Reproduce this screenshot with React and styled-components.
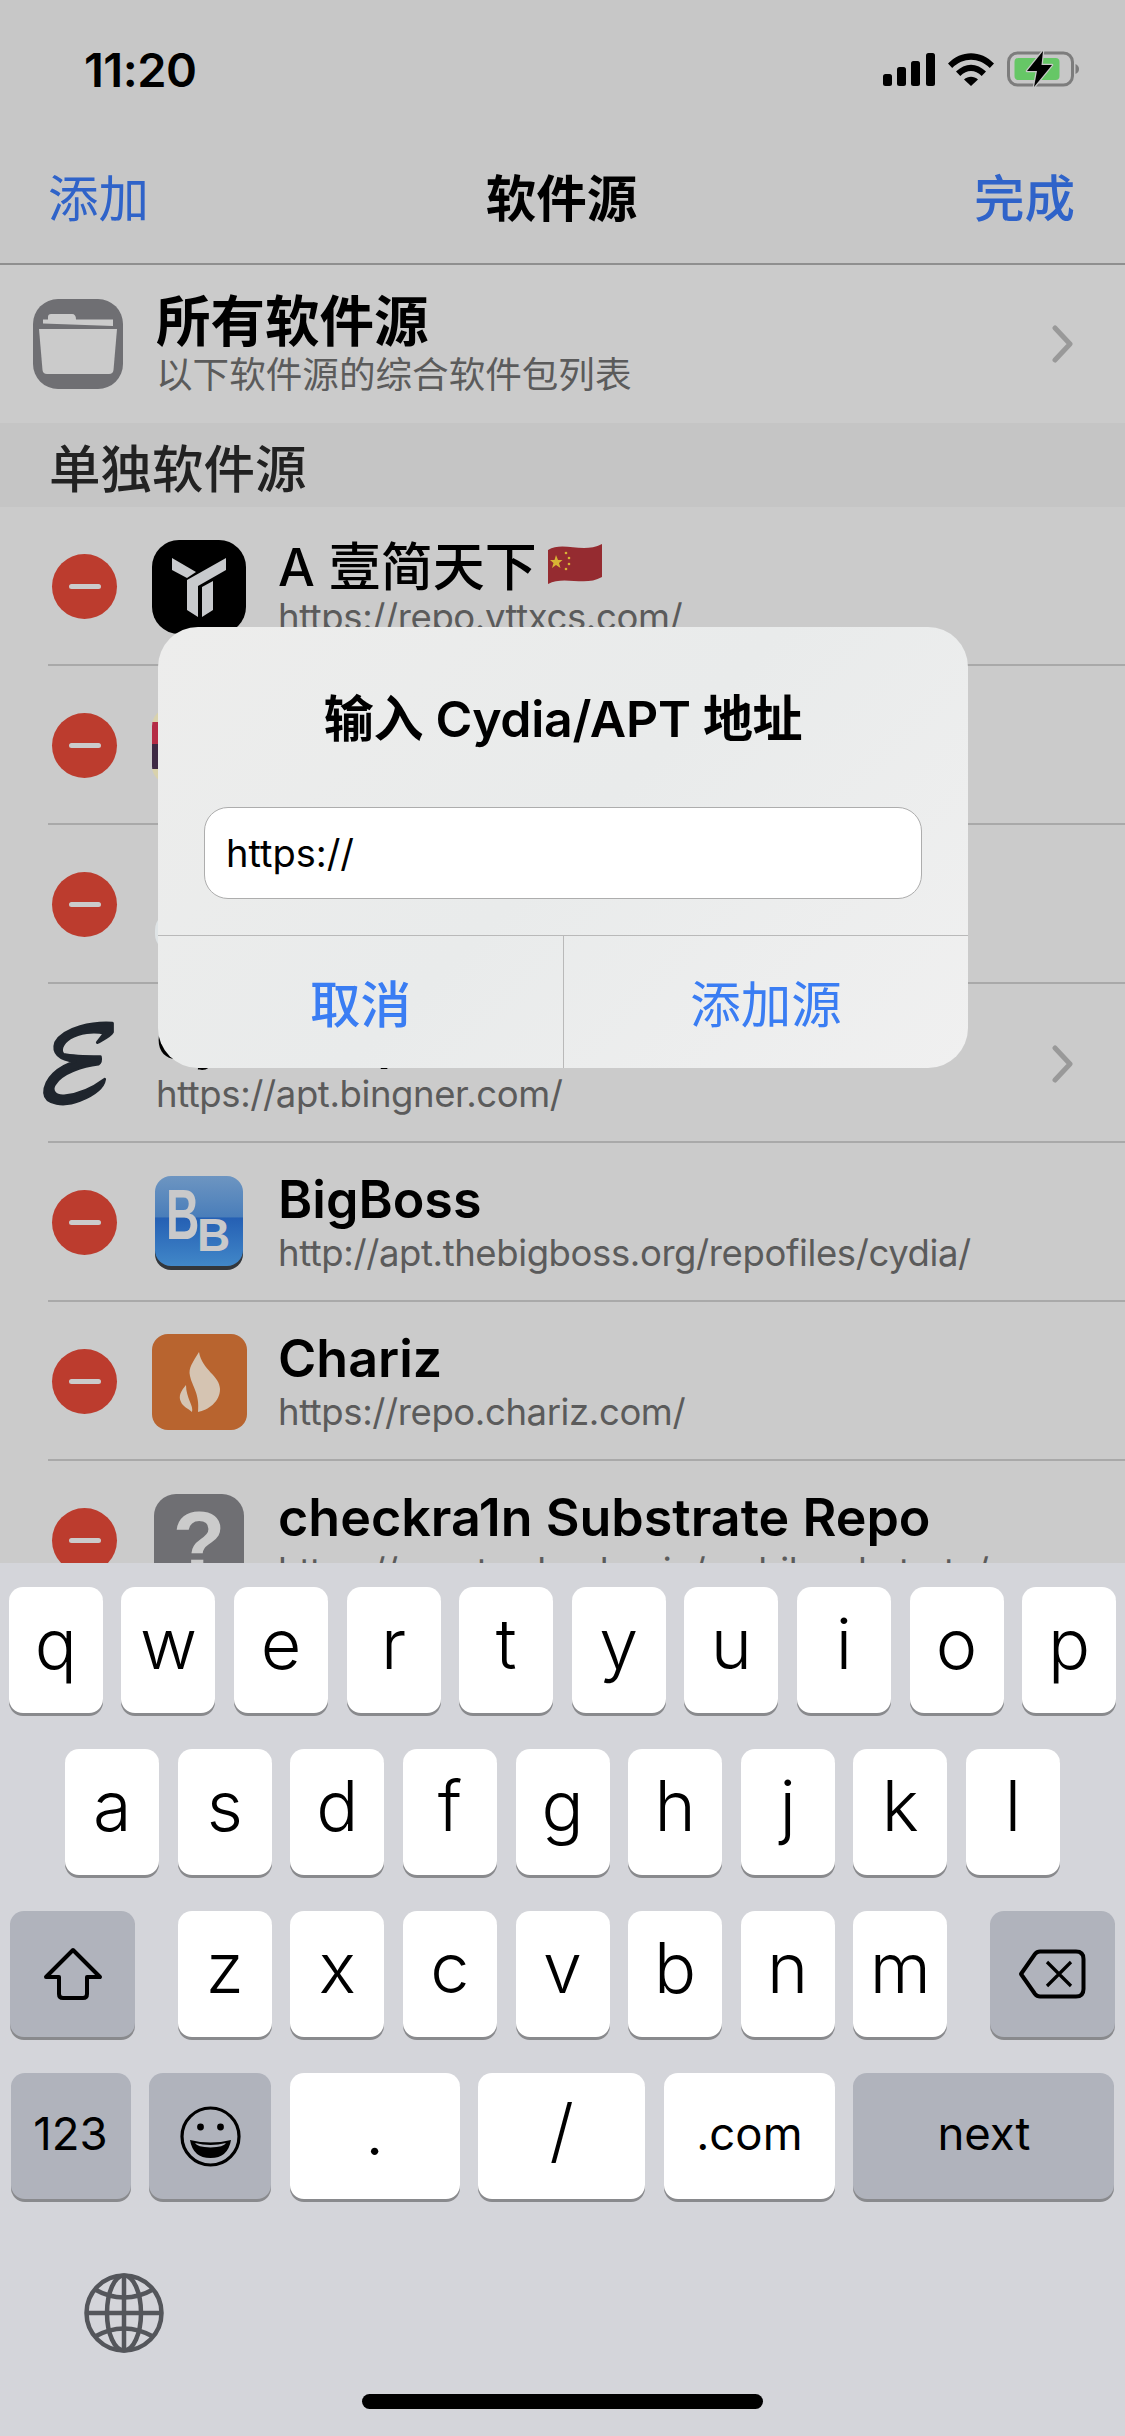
import React from "react";
import styled, { createGlobalStyle } from "styled-components";

const SANS = `Inter, "Noto Sans CJK SC", "Noto Sans", sans-serif`;

const Global = createGlobalStyle`
  html, body { margin: 0; padding: 0; background: #cbcbcb; }
  * { box-sizing: border-box; }
`;

const Screen = styled.div`
  position: relative;
  width: 1125px;
  height: 2436px;
  overflow: hidden;
  display: flex;
  flex-direction: column;
  background: #cbcbcb;
  font-family: ${SANS};
  color: #000;
`;

/* Header */
const Header = styled.header`
  flex: none;
  height: 265px;
  background: #c7c7c7;
  border-bottom: 2px solid #8f8f8f;
`;
const StatusBar = styled.div`
  height: 132px;
  padding: 6px 44px 0 84px;
  display: flex;
  align-items: center;
  justify-content: space-between;
`;
const Time = styled.span`
  font-size: 47px;
  font-weight: 600;
  letter-spacing: -0.5px;
`;
const StatusIcons = styled.div`
  display: flex;
  align-items: center;
  gap: 13px;
`;
const Nav = styled.nav`
  height: 131px;
  padding: 0 50px 5px 48px;
  display: grid;
  grid-template-columns: 1fr auto 1fr;
  align-items: center;
`;
const NavAction = styled.span`
  font-size: 50.5px;
  color: #2f63c9;
  font-weight: ${(p) => (p.$bold ? 500 : 400)};
  text-align: ${(p) => (p.$right ? "right" : "left")};
`;
const NavTitle = styled.span`
  font-size: 50.5px;
  font-weight: 600;
`;

/* List */
const List = styled.main`
  flex: 1;
  min-height: 0;
  overflow: hidden;
`;
const AllRow = styled.div`
  height: 158px;
  padding: 0 50px 0 33px;
  display: flex;
  align-items: center;
`;
const FolderIcon = styled.svg`
  flex: none;
  width: 90px;
  height: 90px;
  margin-right: 33px;
`;
const AllText = styled.div`
  flex: 1;
  display: flex;
  flex-direction: column;
`;
const AllTitle = styled.div`
  font-size: 54.5px;
  line-height: 62px;
  font-weight: 600;
`;
const AllSub = styled.div`
  font-size: 36.6px;
  line-height: 46px;
  color: #5b5b5b;
`;
const SectionHead = styled.div`
  height: 84px;
  padding-left: 49px;
  display: flex;
  align-items: center;
  background: #c5c5c5;
  font-size: 51.5px;
  font-weight: 500;
  color: #222;
`;
const Row = styled.div`
  height: 157px;
  padding: ${(p) => (p.$plain ? "2px 50px 0 42px" : "2px 50px 0 52px")};
  display: flex;
  align-items: center;
  white-space: nowrap;
`;
const Separator = styled.div`
  height: 2px;
  margin-left: 48px;
  background: #a9a9a9;
`;
const Minus = styled.span`
  flex: none;
  width: 65px;
  height: 65px;
  margin-right: 33px;
  border-radius: 50%;
  background: #bc3c2e;
  display: flex;
  align-items: center;
  justify-content: center;
  &::before {
    content: "";
    width: 32px;
    height: 5px;
    border-radius: 3px;
    background: #cbcbcb;
  }
`;
const IconSlot = styled.div`
  flex: none;
  width: 98px;
  height: 94px;
  margin-right: 30px;
  display: flex;
  align-items: center;
  justify-content: center;
`;
const ScriptSlot = styled.div`
  flex: none;
  width: 73px;
  height: 88px;
  margin: 0 41px 0 0;
`;
const RowText = styled.div`
  flex: 1;
  min-width: 0;
  display: flex;
  flex-direction: column;
`;
const RowTitle = styled.div`
  display: flex;
  align-items: center;
  gap: 10px;
  height: 60px;
  font-size: 52px;
  font-weight: 600;
`;
const Han = styled.span`
  font-weight: 500;
`;
const RowSub = styled.div`
  height: 46px;
  line-height: 46px;
  font-size: 36.5px;
  letter-spacing: -0.4px;
  color: #5b5b5b;
`;
const Chevron = styled.svg`
  flex: none;
  width: 24px;
  height: 38px;
`;
const QuestionIcon = styled.div`
  width: 90px;
  height: 94px;
  border-radius: 22px;
  background: #6f6f73;
  color: #cbcbcb;
  font-family: "Liberation Sans", sans-serif;
  font-size: 86px;
  font-weight: 700;
  line-height: 94px;
  text-align: center;
`;
const SliverIcon = styled.div`
  width: ${(p) => (p.$pale ? 88 : 94)}px;
  height: ${(p) => (p.$pale ? 40 : 76)}px;
  align-self: ${(p) => (p.$pale ? "flex-end" : "center")};
  border-radius: 18px;
  background: ${(p) =>
    p.$pale
      ? "#dfe4e6"
      : "linear-gradient(180deg, #d9d2ac 0 18%, #b52c45 18% 48%, #3e2a44 48% 80%, #d9d2ac 80%)"};
`;

/* Dialog */
const Dialog = styled.section`
  position: absolute;
  left: 158px;
  top: 627px;
  width: 810px;
  height: 441px;
  border-radius: 40px;
  overflow: hidden;
  display: flex;
  flex-direction: column;
  background: linear-gradient(135deg, #ededec 0%, #e9ebeb 50%, #f0f0f0 100%);
`;
const DialogTitle = styled.h2`
  flex: none;
  margin: 0;
  height: 180px;
  padding-bottom: 5px;
  display: flex;
  align-items: center;
  justify-content: center;
  font-size: 50px;
  font-weight: 600;
  letter-spacing: -0.3px;
`;
const Field = styled.input`
  flex: none;
  height: 92px;
  margin: 0 46px;
  padding: 0 21px;
  border: 1.5px solid #adadad;
  border-radius: 24px;
  background: #fff;
  font-family: ${SANS};
  font-size: 38px;
  color: #000;
  outline: none;
`;
const Actions = styled.div`
  flex: 1;
  margin-top: 36px;
  display: grid;
  grid-template-columns: 405px 1fr;
  border-top: 1.5px solid #b9b9b9;
`;
const ActionButton = styled.button`
  border: 0;
  padding: 0 0 3px;
  background: transparent;
  font-family: ${SANS};
  font-size: 50.5px;
  font-weight: ${(p) => (p.$strong ? 500 : 400)};
  color: #3a7df3;
  & + & {
    border-left: 1.5px solid #b9b9b9;
  }
`;

/* Keyboard */
const Keyboard = styled.section`
  flex: none;
  height: 873px;
  padding-top: 24px;
  background: #d4d5da;
  display: flex;
  flex-direction: column;
`;
const KeyRows = styled.div`
  display: flex;
  flex-direction: column;
  gap: 36px;
  padding: 0 9px;
`;
const KeyRow = styled.div`
  display: flex;
  justify-content: center;
  gap: 18.6px;
`;
const Key = styled.div`
  flex: none;
  width: ${(p) => p.$w || 94}px;
  height: 126px;
  margin-left: ${(p) => p.$before || 0}px;
  margin-right: ${(p) => p.$after || 0}px;
  border-radius: 14px;
  background: ${(p) => (p.$dark ? "#b0b3bc" : "#fff")};
  box-shadow: 0 3px 0 #898a8d;
  display: flex;
  align-items: center;
  justify-content: center;
  padding-bottom: ${(p) => (p.$glyph ? 0 : p.$small ? 5 : 13)}px;
  font-size: ${(p) => (p.$small ? 45.5 : 70)}px;
  font-weight: ${(p) => (p.$small ? 400 : 300)};
  color: #000;
`;
const Foot = styled.div`
  margin-top: 74px;
  padding-left: 84px;
  display: flex;
`;
const HomeBar = styled.div`
  width: 401px;
  height: 15px;
  margin: 41px auto 0;
  border-radius: 8px;
  background: #000;
`;

/* Drawings */
const Signal = () => (
  <svg width="52" height="33" viewBox="0 0 52 33">
    <rect x="0" y="21" width="9" height="12" rx="2.5" />
    <rect x="14" y="14" width="9" height="19" rx="2.5" />
    <rect x="28" y="8" width="9" height="25" rx="2.5" />
    <rect x="43" y="0" width="9" height="33" rx="2.5" />
  </svg>
);
const Wifi = () => (
  <svg width="46" height="33" viewBox="0 0 46 33">
    <path d="M0 10.5C13 -3.3 33 -3.3 46 10.5L41.8 15C31 4 15 4 4.2 15Z" />
    <path d="M8 18.6C17 9.3 29 9.3 38 18.6L33.7 23C27 16.3 19 16.3 12.3 23Z" />
    <path d="M16 26.5C20 22.7 26 22.7 30 26.5L23 33Z" />
  </svg>
);
const Battery = () => (
  <svg width="74" height="36" viewBox="0 0 74 36">
    <rect x="1.5" y="2" width="64" height="32" rx="9" fill="none" stroke="#7d7d7d" strokeWidth="3" />
    <rect x="7.5" y="7" width="45" height="22" rx="4" fill="#66c766" />
    <path d="M68.5 13C71 14 72 16 72 18S71 22 68.5 23Z" fill="#7d7d7d" />
    <path
      d="M36 0 L20 20 H30 L27 36 L45 14 H34.5 Z"
      fill="#000"
      stroke="#c7c7c7"
      strokeWidth="2.5"
      strokeLinejoin="round"
      paintOrder="stroke"
    />
  </svg>
);
const Folder = () => (
  <FolderIcon viewBox="0 0 90 90">
    <rect width="90" height="90" rx="25" fill="#6f6f73" />
    <path d="M10 20.5H15V18Q15 15 18 15H39Q43 15 43 20.5H80V27L10 24.5Z" fill="#cbcbcb" />
    <path d="M6 30H84L80.5 71Q80 75 76 75H14Q10 75 9.5 71Z" fill="#cbcbcb" />
  </FolderIcon>
);
const ChevronRight = () => (
  <Chevron viewBox="0 0 24 38">
    <path d="M4 3L19 19L4 35" fill="none" stroke="#999" strokeWidth="5" strokeLinecap="round" strokeLinejoin="round" />
  </Chevron>
);
const Tlogo = () => (
  <svg width="94" height="94" viewBox="0 0 94 94">
    <rect width="94" height="94" rx="27" fill="#000" />
    <g fill="#c8cacd">
      <path d="M20 18L44 32L35 38L20 30Z" />
      <path d="M35 40L74 18V30L46 46V77L35 70Z" />
      <path d="M50 47L61 41V70L50 77Z" />
    </g>
  </svg>
);
const BigBossIcon = () => (
  <svg width="88" height="94" viewBox="0 0 88 94">
    <defs>
      <linearGradient id="bbg" x1="0" y1="0" x2="0" y2="1">
        <stop offset="0" stopColor="#6d95c1" />
        <stop offset="0.45" stopColor="#4a7eba" />
        <stop offset="0.47" stopColor="#2560b4" />
        <stop offset="1" stopColor="#4187c8" />
      </linearGradient>
    </defs>
    <rect y="4" width="88" height="90" rx="16" fill="#33373c" />
    <rect width="88" height="90" rx="16" fill="url(#bbg)" />
    <text transform="translate(11 63) scale(.66 1)" fontFamily="Liberation Sans" fontWeight="700" fontSize="70" fill="#c9c9ca">B</text>
    <text x="42" y="75" fontFamily="Liberation Sans" fontWeight="700" fontSize="46" fill="#c9c9ca">B</text>
  </svg>
);
const ChrizIcon = () => (
  <svg width="95" height="96" viewBox="0 0 95 96">
    <rect width="95" height="96" rx="16" fill="#b8642f" />
    <g fill="#d5c4b2">
      <path d="M47 18C41 28 36 34 38 42C40 52 48 60 46 78C56 76 68 68 68 55C68 42 50 36 47 18Z" />
      <path d="M34 51C29 57 26 62 29 68C31 73 36 74 40 78C42 72 34 64 34 51Z" />
    </g>
  </svg>
);
const ScriptE = () => (
  <svg width="73" height="88" viewBox="62 83 224 266">
    <path
      fill="#1f252d"
      stroke="#1f252d"
      strokeWidth="9"
      strokeLinejoin="round"
      d="M278 91C220 87 130 104 104 150C94 180 112 203 165 208C112 225 70 260 70 305C72 340 130 347 178 328C223 310 250 290 254 263C226 284 180 309 130 314C102 316 88 297 101 278C121 243 190 221 235 216C241 212 243 204 241 194C210 194 160 194 128 187C116 177 121 153 148 136C178 118 220 114 254 121L232 150C250 140 272 130 278 118Z"
    />
  </svg>
);
const Flag = () => (
  <svg width="56" height="42" viewBox="0 0 56 42">
    <path d="M1 7C16 -2 36 11 55 1V34C38 44 17 32 1 41Z" fill="#952b30" />
    <path d="M9 12L11 17H15.5L12 20L13.5 25L9 22L5 25L6.5 20L3 17H7.5Z" fill="#d8b334" />
    <g fill="#d8b334">
      <circle cx="19" cy="10" r="1.3" />
      <circle cx="22" cy="15" r="1.3" />
      <circle cx="22" cy="21" r="1.3" />
      <circle cx="19" cy="26" r="1.3" />
    </g>
  </svg>
);
const ShiftGlyph = () => (
  <svg width="62" height="54" viewBox="0 0 62 54">
    <path
      d="M31 3L58 30H45V47Q45 51 41 51H21Q17 51 17 47V30H4Z"
      fill="none"
      stroke="#000"
      strokeWidth="4"
      strokeLinejoin="round"
    />
  </svg>
);
const DeleteGlyph = () => (
  <svg width="68" height="50" viewBox="0 0 68 50">
    <path
      d="M22 2.5H58Q65.5 2.5 65.5 10V40Q65.5 47.5 58 47.5H22Q19 47.5 17 45L3 25L17 5Q19 2.5 22 2.5Z"
      fill="none"
      stroke="#000"
      strokeWidth="4"
      strokeLinejoin="round"
    />
    <path d="M29 13L53 37M53 13L29 37" fill="none" stroke="#000" strokeWidth="3.2" />
  </svg>
);
const SmileGlyph = () => (
  <svg width="61" height="61" viewBox="0 0 61 61">
    <circle cx="30.5" cy="30.5" r="28.5" fill="none" stroke="#000" strokeWidth="3.2" />
    <circle cx="20.5" cy="21" r="3.4" />
    <circle cx="40.5" cy="21" r="3.4" />
    <path d="M10 34Q30.5 39 51 34Q48 52 30.5 52Q13 52 10 34Z" fill="#000" />
    <path d="M15 37Q30.5 41 46 37Q44 41 30.5 41.5Q17 41 15 37Z" fill="#b0b3bc" />
  </svg>
);
const Globe = () => (
  <svg width="80" height="80" viewBox="0 0 80 80" fill="none" stroke="#54565b" strokeWidth="4.5">
    <circle cx="40" cy="40" r="37.5" />
    <ellipse cx="40" cy="40" rx="17" ry="37.5" />
    <path d="M40 2.5V77.5M2.5 40H77.5" />
    <path d="M10 16Q40 33 70 16M10 64Q40 47 70 64" />
  </svg>
);

const sources = [
  { key: "a", title: <><Han>A 壹简天下</Han><Flag /></>, sub: "https://repo.yttxcs.com/", icon: <Tlogo /> },
  { key: "b", icon: <SliverIcon /> },
  { key: "c", icon: <SliverIcon $pale /> },
  { key: "d", plain: true, title: "Cydia Repo", sub: "https://apt.bingner.com/" },
  { key: "e", title: "BigBoss", sub: "http://apt.thebigboss.org/repofiles/cydia/", icon: <BigBossIcon /> },
  { key: "f", title: "Chariz", sub: "https://repo.chariz.com/", icon: <ChrizIcon /> },
  { key: "g", title: "checkra1n Substrate Repo", sub: "https://assets.checkra.in/mobilesubstrate/", icon: <QuestionIcon>?</QuestionIcon> },
];

const rowOne = ["q", "w", "e", "r", "t", "y", "u", "i", "o", "p"];
const rowTwo = ["a", "s", "d", "f", "g", "h", "j", "k", "l"];
const rowThree = ["z", "x", "c", "v", "b", "n", "m"];

export default function App() {
  return (
    <Screen>
      <Global />
      <Header>
        <StatusBar>
          <Time>11:20</Time>
          <StatusIcons>
            <Signal />
            <Wifi />
            <Battery />
          </StatusIcons>
        </StatusBar>
        <Nav>
          <NavAction>添加</NavAction>
          <NavTitle>软件源</NavTitle>
          <NavAction $right $bold>完成</NavAction>
        </Nav>
      </Header>
      <List>
        <AllRow>
          <Folder />
          <AllText>
            <AllTitle>所有软件源</AllTitle>
            <AllSub>以下软件源的综合软件包列表</AllSub>
          </AllText>
          <ChevronRight />
        </AllRow>
        <SectionHead>单独软件源</SectionHead>
        {sources.map((s) => (
          <React.Fragment key={s.key}>
            <Row $plain={s.plain}>
              {s.plain ? (
                <ScriptSlot><ScriptE /></ScriptSlot>
              ) : (
                <>
                  <Minus />
                  <IconSlot>{s.icon}</IconSlot>
                </>
              )}
              <RowText>
                {s.title && <RowTitle>{s.title}</RowTitle>}
                {s.sub && <RowSub>{s.sub}</RowSub>}
              </RowText>
              {s.plain && <ChevronRight />}
            </Row>
            <Separator />
          </React.Fragment>
        ))}
      </List>
      <Dialog>
        <DialogTitle>输入 Cydia/APT 地址</DialogTitle>
        <Field readOnly value="https://" />
        <Actions>
          <ActionButton $strong>取消</ActionButton>
          <ActionButton>添加源</ActionButton>
        </Actions>
      </Dialog>
      <Keyboard>
        <KeyRows>
          <KeyRow>{rowOne.map((k) => <Key key={k}>{k}</Key>)}</KeyRow>
          <KeyRow>{rowTwo.map((k) => <Key key={k}>{k}</Key>)}</KeyRow>
          <KeyRow>
            <Key $dark $glyph $w={125} $after={24}><ShiftGlyph /></Key>
            {rowThree.map((k) => <Key key={k}>{k}</Key>)}
            <Key $dark $glyph $w={125} $before={24}><DeleteGlyph /></Key>
          </KeyRow>
          <KeyRow>
            <Key $dark $small $w={120}>123</Key>
            <Key $dark $glyph $w={122}><SmileGlyph /></Key>
            <Key $w={170}>.</Key>
            <Key $w={167}>/</Key>
            <Key $small $w={171}>.com</Key>
            <Key $dark $small $w={261}>next</Key>
          </KeyRow>
        </KeyRows>
        <Foot><Globe /></Foot>
        <HomeBar />
      </Keyboard>
    </Screen>
  );
}
